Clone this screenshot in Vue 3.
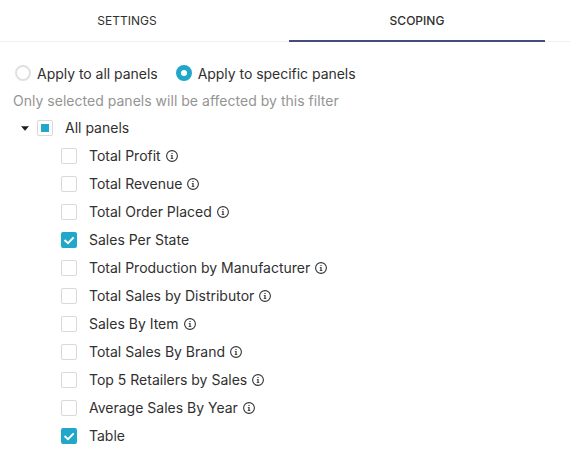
<script setup>
import { ref } from 'vue'

const tabs = ['Settings', 'Scoping']
const activeTab = ref('Scoping')

const scopes = [
  { value: 'all', label: 'Apply to all panels' },
  { value: 'specific', label: 'Apply to specific panels' },
]
const scope = ref('specific')

const panels = ref([
  { label: 'Total Profit', info: true, checked: false },
  { label: 'Total Revenue', info: true, checked: false },
  { label: 'Total Order Placed', info: true, checked: false },
  { label: 'Sales Per State', info: false, checked: true },
  { label: 'Total Production by Manufacturer', info: true, checked: false },
  { label: 'Total Sales by Distributor', info: true, checked: false },
  { label: 'Sales By Item', info: true, checked: false },
  { label: 'Total Sales By Brand', info: true, checked: false },
  { label: 'Top 5 Retailers by Sales', info: true, checked: false },
  { label: 'Average Sales By Year', info: true, checked: false },
  { label: 'Table', info: false, checked: true },
])
</script>

<template>
  <div class="pane">
    <nav class="tabs">
      <button
        v-for="tab in tabs"
        :key="tab"
        class="tab"
        :class="{ active: tab === activeTab }"
        @click="activeTab = tab"
      >{{ tab }}</button>
    </nav>

    <div class="radios">
      <div v-for="s in scopes" :key="s.value" class="radio-item" @click="scope = s.value">
        <span class="radio" :class="{ selected: s.value === scope }"></span>
        <span class="radio-label">{{ s.label }}</span>
      </div>
    </div>
    <p class="hint">Only selected panels will be affected by this filter</p>

    <div class="tree">
      <div class="row root">
        <svg class="caret" viewBox="0 0 8 5" width="8" height="5"><path d="M0.5 0.4h7L4 4.4z" fill="#1b1b1b" stroke="#1b1b1b" stroke-width=".5" stroke-linejoin="round" /></svg>
        <span class="box partial"></span>
        <span class="label">All panels</span>
      </div>
      <div v-for="p in panels" :key="p.label" class="row child" @click="p.checked = !p.checked">
        <span class="box" :class="{ checked: p.checked }">
          <svg v-if="p.checked" viewBox="0 0 16 16" width="16" height="16"><path d="M3.5 8.1 7 11.2 12.7 5.4" fill="none" stroke="#fff" stroke-width="2" /></svg>
        </span>
        <span class="label">{{ p.label }}</span>
        <svg v-if="p.info" class="info" viewBox="0 0 12 12" width="12" height="12">
          <circle cx="6" cy="6" r="5.4" fill="none" stroke="#333" stroke-width="1.1" />
          <path d="M5.4 2.9h1.2v1.2H5.4zM4.8 5h1.8v3.2h.7v.8H4.7v-.8h.7V5.8h-.6z" fill="#333" />
        </svg>
      </div>
    </div>
  </div>
</template>

<style>
body {
  background: #fff;
}
</style>

<style scoped>
.pane {
  box-sizing: border-box;
  height: 476px;
  overflow: hidden;
  font-family: Inter, "Liberation Sans", sans-serif;
  font-size: 14px;
  color: #303030;
}
.tabs {
  display: grid;
  grid-template-columns: 256px 256px;
  column-gap: 34px;
  height: 42px;
  padding-right: 25px;
  box-sizing: border-box;
  justify-content: end;
  box-shadow: inset 0 -1px #f0f0f0;
}
.tab {
  border: 0;
  border-bottom: 2px solid transparent;
  background: none;
  padding: 2px 0 0;
  font: 400 12px/38px Inter, "Liberation Sans", sans-serif;
  text-transform: uppercase;
  color: #303030;
}
.tab.active {
  font-weight: 500;
  border-bottom-color: #444e7c;
}
.radios {
  display: flex;
  gap: 18px;
  padding: 20px 0 0 15px;
  line-height: 24px;
}
.radio-item {
  display: flex;
  align-items: center;
  gap: 6px;
  height: 24px;
}
.radio-label {
  letter-spacing: -0.03px;
}
.radio {
  box-sizing: border-box;
  width: 16px;
  height: 16px;
  margin-bottom: 2px;
  border: 2px solid #e0e0e0;
  border-radius: 50%;
}
.radio.selected {
  border: 5px solid #20a7c9;
}
.hint {
  margin: 4px 0 4px 13px;
  line-height: 22px;
  letter-spacing: 0.02px;
  color: #949494;
}
.row {
  display: flex;
  align-items: center;
  height: 24px;
  margin-bottom: 4px;
}
.root {
  padding-left: 21px;
}
.caret {
  margin-right: 8px;
}
.child {
  padding-left: 61px;
}
.label {
  line-height: 24px;
}
.box {
  box-sizing: border-box;
  display: flex;
  flex: none;
  align-items: center;
  justify-content: center;
  width: 16px;
  height: 16px;
  margin-right: 12px;
  border: 1px solid #d9d9d9;
  border-radius: 2px;
}
.box.checked {
  border: 0;
  background: #20a7c9;
}
.partial::after {
  content: "";
  width: 8px;
  height: 8px;
  background: #20a7c9;
}
.info {
  margin-left: 5px;
}
</style>
